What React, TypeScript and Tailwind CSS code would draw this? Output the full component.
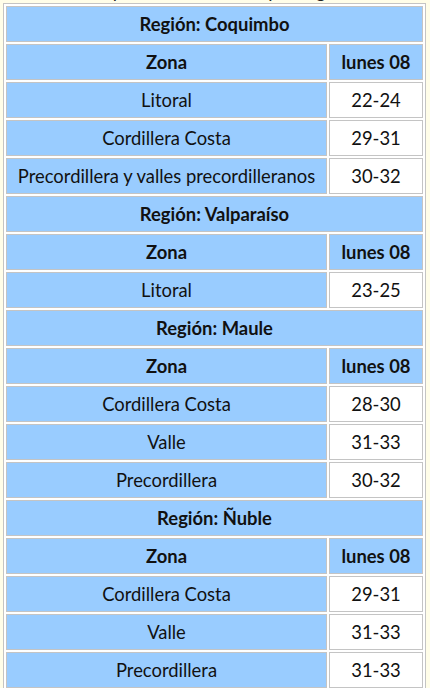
type Row = { zona: string; temp: string };
type Region = { nombre: string; filas: Row[] };

const regiones: Region[] = [
  {
    nombre: "Coquimbo",
    filas: [
      { zona: "Litoral", temp: "22-24" },
      { zona: "Cordillera Costa", temp: "29-31" },
      { zona: "Precordillera y valles precordilleranos", temp: "30-32" },
    ],
  },
  { nombre: "Valparaíso", filas: [{ zona: "Litoral", temp: "23-25" }] },
  {
    nombre: "Maule",
    filas: [
      { zona: "Cordillera Costa", temp: "28-30" },
      { zona: "Valle", temp: "31-33" },
      { zona: "Precordillera", temp: "30-32" },
    ],
  },
  {
    nombre: "Ñuble",
    filas: [
      { zona: "Cordillera Costa", temp: "29-31" },
      { zona: "Valle", temp: "31-33" },
      { zona: "Precordillera", temp: "31-33" },
    ],
  },
];

const cell = "h-[36px] p-0 pt-[2px] border border-[#c4c4c4] text-center align-middle";

export default function App() {
  return (
    <div
      className="w-[430px] h-[688px] overflow-hidden bg-[#fffde8] text-[#111] text-[18.4px]"
      style={{ fontFamily: "Lato, 'Open Sans', sans-serif" }}
    >
      <div className="h-[3px] overflow-hidden">
        <p className="-mt-[19px] text-center leading-[20px] text-[#222]">Temperaturas máximas por región</p>
      </div>
      <table className="ml-[3px] w-[423px] border-separate border-spacing-[2px] border border-[#c4c4c4] bg-white">
        <tbody>
          {regiones.map((r) => (
            <>
              <tr key={r.nombre}>
                <th colSpan={2} className={`${cell} bg-[#99ccff] font-bold`}>
                  Región: {r.nombre}
                </th>
              </tr>
              <tr key={r.nombre + "-h"}>
                <th className={`${cell} bg-[#99ccff] font-bold`}>Zona</th>
                <th className={`${cell} w-[94px] bg-[#99ccff] font-bold`}>lunes 08</th>
              </tr>
              {r.filas.map((f) => (
                <tr key={r.nombre + f.zona}>
                  <td className={`${cell} bg-[#99ccff]`}>{f.zona}</td>
                  <td className={`${cell} w-[94px] bg-white`}>{f.temp}</td>
                </tr>
              ))}
            </>
          ))}
        </tbody>
      </table>
    </div>
  );
}
